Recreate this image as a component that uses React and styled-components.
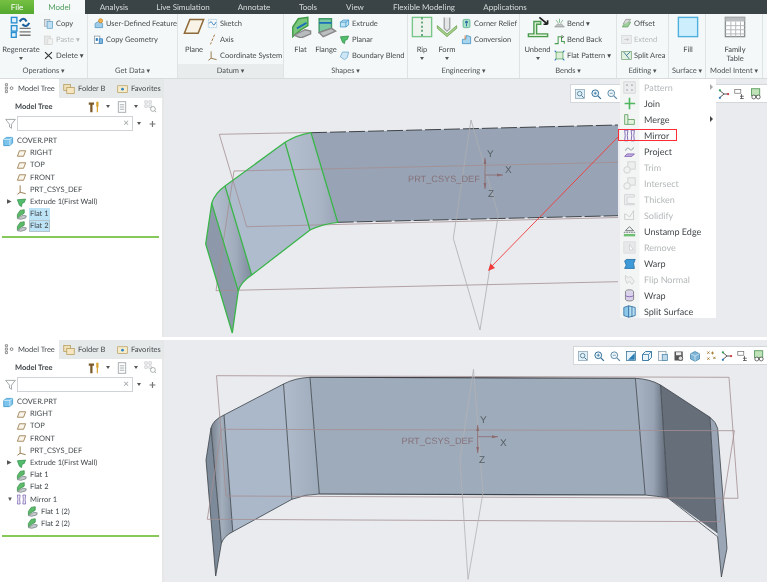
import React from 'react';
import styled, { createGlobalStyle } from 'styled-components';

const FONT = `Lato, "Open Sans", sans-serif`;

const GlobalStyle = createGlobalStyle`
  html, body { margin: 0; padding: 0; background: #fff; }
  body { font-family: ${FONT}; color: #43494c; }
`;

// Icons, all drawn in a 16x16 box
const ICONS = {
  regen: <><rect x="1" y="1" width="4" height="4" fill="#dff1fb" stroke="#2a8fd0"/><rect x="1" y="7" width="4" height="4" fill="#dff1fb" stroke="#2a8fd0"/><rect x="1" y="12" width="3.5" height="3.5" fill="#dff1fb" stroke="#2a8fd0"/><path d="M7 4q3-4 5 0M14 5q-2 4-5 1" fill="none" stroke="#1c5f9c" strokeWidth="1.6"/><path d="M7 9h8M7 11.5h8M7 14h8" stroke="#777" strokeWidth="1"/></>,
  copy: <><rect x="2" y="2" width="8" height="10" fill="#d8dfe4" stroke="#9aa4aa"/><rect x="6" y="5" width="8" height="10" fill="#bfe0f3" stroke="#5b9cc4"/></>,
  paste: <><rect x="2" y="3" width="9" height="12" fill="#e2e2e2" stroke="#c4c4c4"/><rect x="7" y="7" width="7" height="8" fill="#f0f0f0" stroke="#c8c8c8"/></>,
  del: <path d="M3 3l10 10M13 3L3 13" stroke="#333" strokeWidth="1.6"/>,
  udf: <><path d="M3 14V8l5-3 6 3v6z" fill="#9ccce8" stroke="#4a90bd"/><circle cx="11" cy="4" r="3" fill="#f0b34c" stroke="#c07f20"/></>,
  cgeom: <><rect x="2" y="3" width="8" height="11" fill="#fff" stroke="#7b8a94"/><rect x="4" y="6" width="3" height="4" fill="#2a78b8"/><rect x="9" y="7" width="5" height="7" fill="#7fb8dc" stroke="#2a78b8"/></>,
  plane: <path d="M5 2.5h10l-4 10H1z" fill="#f8f3e6" stroke="#8d6a38" strokeWidth="1.1"/>,
  sketch: <><path d="M2 2h12v12H2z" fill="none" stroke="#8fb9d6" strokeDasharray="2 1"/><path d="M3 8q3-5 5 0t5-2" fill="none" stroke="#2a78b8" strokeWidth="1.3"/></>,
  axis: <path d="M11 1L5 15" stroke="#9a6a30" strokeWidth="1.3" strokeDasharray="4 2"/>,
  csys: <path d="M6 2v10M6 12l8 2M6 12l-4 3" fill="none" stroke="#86642f" strokeWidth="1.2"/>,
  flat: <><path d="M2 15V8l4-6 7-1v6l-5 3z" fill="#79c77a" stroke="#3f9a47"/><path d="M3 14l8-4 4 1 0 2-7 3z" fill="#b9bcbe" stroke="#888"/><path d="M5 9l7-4" stroke="#1b6fb8" strokeWidth="1.3"/></>,
  flange: <><path d="M3 12V2h9v7z" fill="#7ac7a0" stroke="#3f9a67"/><path d="M3 5h9" stroke="#1b6fb8" strokeWidth="1.3"/><path d="M3 12l9-3 3 2-9 4z" fill="#bcbfc0" stroke="#888"/></>,
  extrude: <><path d="M2 6l4-3h8v7l-4 3H2z" fill="#bfe3f5" stroke="#2d8bc2"/><path d="M2 6h8v7M10 6l4-3" fill="none" stroke="#2d8bc2"/></>,
  planar: <path d="M2 4l12-1-2 5-3 1-1 5-3-2z" fill="#53bd6e" stroke="#2d8a46"/>,
  boundary: <path d="M2 10l3-7h9l-2 8-4 3z" fill="#cfe7f5" stroke="#5c9fcb"/>,
  rip: <><rect x="1" y="1" width="14" height="14" fill="#eef3ee" stroke="#79c68b"/><path d="M8 1v14" stroke="#2a8a4e" strokeDasharray="1.5 1.5"/></>,
  form: <><path d="M1 7l7 6 7-6v2l-7 6-7-6z" fill="#a8d08d" stroke="#6fa356" strokeWidth=".6"/><path d="M6 1v8l2 2 2-2V1" fill="#e4e6e8" stroke="#a2a6a8"/></>,
  corner: <><rect x="3" y="2" width="10" height="12" rx="2" fill="#a8e2c8" stroke="#43a47a"/><circle cx="8" cy="6" r="2" fill="#2e6ea6"/><path d="M8 8v4" stroke="#2e6ea6" strokeWidth="1.5"/></>,
  conversion: <><path d="M2 14V8l5-1 1-5 6 2v10z" fill="#a8d5ee" stroke="#2f86bc"/><path d="M6 2v6" stroke="#d67d3e" strokeWidth="1.4"/></>,
  unbend: <><path d="M1 13h4V4h5v2h-3v7h8v2H1z" fill="#dff0d8" stroke="#4a9a4e"/><path d="M9 1l6 5M15 6V3M15 6h-3" fill="none" stroke="#222" strokeWidth="1.2"/></>,
  bend: <><path d="M1 13l5-5 2 2 2-2 5 5z" fill="#bcc3c0" stroke="#8b938f"/><path d="M8 1v6M3 3l3 4M13 3l-3 4" stroke="#7fb98a" strokeWidth="1.4"/></>,
  bendback: <><path d="M1 14h5V4h5v7h4v3" fill="none" stroke="#4a9a4e" strokeWidth="1.5"/><path d="M11 2l3 2-3 2" fill="none" stroke="#333"/></>,
  flatp: <><rect x="3" y="3" width="10" height="10" fill="#dcefd9" stroke="#4a9a4e"/><path d="M3 3L1 1M13 3l2-2M3 13l-2 2M13 13l2 2" stroke="#2a78b8" strokeWidth="1.5"/></>,
  offset: <><path d="M2 13l4-7h8l-4 7z" fill="#9fcf9d" stroke="#5c9a5a"/><path d="M3 9l4-7h7l-3 4" fill="#d8d8d8" stroke="#8c8c8c"/></>,
  extend: <><rect x="1" y="2" width="14" height="12" fill="#e8e9ea" stroke="#c6c9cb"/><path d="M5 8h6M9 6l2 2-2 2" fill="none" stroke="#aaa"/></>,
  split: <><rect x="1" y="2" width="14" height="12" fill="#e2f1df" stroke="#6d9a72"/><path d="M4 3l8 10M8 8l5-5" stroke="#276b8f" strokeWidth="1.2"/></>,
  fill: <><rect x="1" y="1" width="14" height="14" fill="#cdeefc" stroke="#4fb0e0"/></>,
  table: <><rect x="1" y="1" width="14" height="14" fill="#fff" stroke="#8a8f92"/><rect x="1" y="1" width="14" height="3" fill="#b9bdc0"/><path d="M1 7h14M1 10h14M1 13h14M5 4v11M8.5 4v11M12 4v11" stroke="#b3b7ba" strokeWidth=".7"/></>,
  cube: <><path d="M1 5l4-3h9v8l-4 4H1z" fill="#7cc4ec" stroke="#2a8cc8"/><path d="M1 5h9v9M10 5l4-3" fill="none" stroke="#e8f6fd"/></>,
  planeSm: <path d="M5 4h9l-3 8H2z" fill="#faf5ea" stroke="#8d6a38" strokeWidth="1.1"/>,
  flatTree: <><path d="M2 13V8l4-6 6-1v5L7 9z" fill="#5dba6a" stroke="#2e8a42"/><path d="M2 14l8-5 5 1-1 3-7 2z" fill="#c5c9cb" stroke="#6f7a7c"/></>,
  mirror: <path d="M2 1.5h4q-1.5 6.5 0 13H2q1.5-6.5 0-13zM14 1.5h-4q1.5 6.5 0 13h4q-1.5-6.5 0-13z" fill="#f5f2fb" stroke="#6b54a8" strokeWidth="1"/>,
  hammer: <><path d="M1 2h7v3H6v10H3V5H1z" fill="#7a5a2a"/><path d="M11 1h3v6l-.7 1v7h-1.6V8L11 7z" fill="#d8a32f"/></>,
  doc: <><rect x="3" y="1" width="10" height="14" fill="#fff" stroke="#8f9699"/><path d="M5 5h6M5 8h6M5 11h6" stroke="#8f9699"/></>,
  settings: <><path d="M1 1h3v3H1zM6 1h3v3H6zM1 6h3v3H1zM6 6h3v3H6z" fill="none" stroke="#c5c8ca"/><circle cx="11" cy="11" r="3" fill="none" stroke="#9da1a3"/><path d="M13 13l2 2" stroke="#9da1a3"/></>,
  filter: <path d="M1 2h14L9.5 9v6l-3-2V9z" fill="#fff" stroke="#7c8386"/>,
  tabTree: <><path d="M2 1h3v3H2zM2 6h3v3H2zM2 11h3v3H2z" fill="none" stroke="#666"/><circle cx="11" cy="7.5" r="2" fill="none" stroke="#555"/></>,
  tabFolder: <><rect x="1" y="2" width="9" height="8" fill="#efe1b9" stroke="#b49a5a"/><rect x="5" y="6" width="10" height="8" fill="#f5e6c0" stroke="#b49a5a"/></>,
  tabFav: <><rect x="1" y="4" width="14" height="10" fill="#f7ecc9" stroke="#b49a5a"/><circle cx="8" cy="9" r="2" fill="#2d84c8"/></>,
  pattern: <><rect x="1" y="1" width="14" height="14" fill="#e9eaeb" stroke="#c8cacc"/><path d="M4 4h2v2H4zM10 4h2v2h-2zM4 10h2v2H4zM10 10h2v2h-2z" fill="#9aa0a4"/></>,
  join: <path d="M7 1h2v6h6v2H9v6H7V9H2V7h5z" fill="#4fb85f"/>,
  merge: <><path d="M2 2h4v6h8v6H2z" fill="#e3f1de" stroke="#5e9c5e"/><path d="M6 8v6" stroke="#5e9c5e"/></>,
  project: <><path d="M2 14l3-3h9l-3 3z" fill="#c8b4e4" stroke="#7a5ab0"/><path d="M3 7q2-5 5-2t5-2" fill="none" stroke="#7a8a90"/></>,
  trim: <><rect x="6" y="1" width="9" height="9" fill="#ececec" stroke="#c0c2c4"/><circle cx="5" cy="11" r="4" fill="#f0f0f0" stroke="#bcbec0"/></>,
  thicken: <path d="M2 2h12v3H5v8h9v1.5H2z" fill="#eceded" stroke="#c2c4c6"/>,
  solidify: <path d="M2 6l3 1 3 3 5-8v11H2z" fill="#f4f4f4" stroke="#b8babc"/>,
  unstamp: <><path d="M1 11h14v3H1z" fill="#6fbf73"/><path d="M8 2l5 5H3z" fill="#f2f2f2" stroke="#5b6468"/><path d="M1 9h14" stroke="#5b6468" strokeDasharray="2 1"/></>,
  remove: <><rect x="1" y="1" width="14" height="14" fill="#e4e5e6" stroke="#d0d2d4"/><path d="M8 4l5 7H8z" fill="#fff" stroke="#bfc1c3"/></>,
  warp: <path d="M4 3h11l-2 5 1 6H2l2-4-2-5z" fill="#3f9bd8" stroke="#1f6ca5"/>,
  flip: <path d="M3 3l4 3 2-2 5 6-3 4-3-4-3 3-2-5z" fill="#eee" stroke="#bcbec0"/>,
  wrap: <><ellipse cx="8" cy="3.5" rx="5" ry="2.5" fill="#dcdcea" stroke="#777"/><path d="M3 3.5v9c0 3 10 3 10 0v-9" fill="#d9d2ea" stroke="#777"/><path d="M3 8c1 2 9 2 10 0" fill="none" stroke="#7a5ab0"/></>,
  splitS: <><path d="M1 3l6-2v14l-6-2z" fill="#8cc8ea" stroke="#2d6d9e"/><path d="M7 1l8 2v10l-8 2z" fill="#b6def3" stroke="#2d6d9e"/><path d="M11 2v13" stroke="#2d6d9e"/></>,
  vFit: <><rect x="2" y="2" width="12" height="12" fill="#dff0f8" stroke="#8aa4b3"/><circle cx="7.5" cy="7.5" r="3" fill="none" stroke="#46708a"/><path d="M10 10l3 3" stroke="#46708a" strokeWidth="1.3"/></>,
  vIn: <><circle cx="7" cy="7" r="4.5" fill="#e8f4fb" stroke="#336f98" strokeWidth="1.3"/><path d="M5 7h4M7 5v4" stroke="#336f98"/><path d="M10.5 10.5l4 4" stroke="#336f98" strokeWidth="1.6"/></>,
  vOut: <><circle cx="7" cy="7" r="4.5" fill="#eef6fb" stroke="#5a8aa8" strokeWidth="1.3"/><path d="M5 7h4" stroke="#5a8aa8"/><path d="M10.5 10.5l4 4" stroke="#5a8aa8" strokeWidth="1.6"/></>,
  vRepaint: <><rect x="2" y="2" width="12" height="12" fill="#e7f3fa" stroke="#356f97"/><path d="M4 13L13 4v9z" fill="#2a7fb7"/></>,
  vCube: <><path d="M2 6l4-4h8v8l-4 4H2z" fill="#eaf5fb" stroke="#2d719f" strokeWidth="1.2"/><path d="M2 6h8v8M10 6l4-4" fill="none" stroke="#2d719f"/></>,
  vViews: <><rect x="2" y="2" width="10" height="12" fill="#f4f6f7" stroke="#7f98a8"/><rect x="7" y="6" width="7" height="8" fill="#bcd9ea" stroke="#4c86ab"/></>,
  vSaved: <><rect x="2" y="2" width="11" height="12" fill="#555"/><rect x="4" y="3" width="7" height="4" fill="#eee"/><circle cx="10" cy="11" r="3" fill="#ddd" stroke="#444"/></>,
  vDisp: <><path d="M2 5l6-3 6 3v7l-6 3-6-3z" fill="#7fb6d8" stroke="#4783a8"/><path d="M2 5l6 3 6-3M8 8v7" fill="none" stroke="#d4e7f2"/></>,
  vDatum: <><path d="M3 2l3 3M3 5l3-3M10 2v4M8 4h4M3 10l3 3M3 13l3-3M11 9l3 3M11 12l3-3" stroke="#a57a30" strokeWidth="1.2"/></>,
  vBranch: <><path d="M2 3l6 5-6 5M8 8h6" fill="none" stroke="#444" strokeWidth="1.2"/><circle cx="2.5" cy="3" r="1.5" fill="#2aa050"/><circle cx="2.5" cy="13" r="1.5" fill="#2d7cc0"/><circle cx="13.5" cy="8" r="1.5" fill="#d23a3a"/></>,
  vTree: <><rect x="1" y="2" width="8" height="5" fill="#fff" stroke="#777"/><path d="M10 8v6M8 11h5M8 14h5" stroke="#444"/></>,
  vPerf: <><rect x="2" y="1" width="11" height="9" fill="#bfe2b9" stroke="#3f8c45"/><circle cx="5" cy="12" r="2.6" fill="#fff" stroke="#444"/><circle cx="11" cy="12" r="2.6" fill="#fff" stroke="#444"/></>,
};

const IconBox = styled.svg`
  display: block;
  flex: none;
  width: ${(p) => p.$size}px;
  height: ${(p) => p.$size}px;
  opacity: ${(p) => (p.$faded ? 0.75 : 1)};
`;

const Icon = ({ name, size = 12, faded }) => (
  <IconBox viewBox="0 0 16 16" $size={size} $faded={faded}>{ICONS[name]}</IconBox>
);

const Page = styled.div`
  position: relative;
  width: 767px;
  height: 582px;
  overflow: hidden;
  background: #fff;
  font-size: 7.5px;
  text-rendering: geometricPrecision;
  filter: blur(0.3px);
`;

// Top tabs
const TabBar = styled.div`
  display: flex;
  height: 14px;
  background: #3a4345;
`;

const Tab = styled.div`
  width: ${(p) => p.$w}px;
  line-height: 14px;
  text-align: center;
  font-size: 8px;
  color: ${(p) => (p.$active ? '#4f9d5e' : '#d7dcdc')};
  background: ${(p) => (p.$active ? '#f6f9f9' : p.$file ? 'linear-gradient(#76c043, #54a92f)' : 'none')};
  ${(p) => p.$file && 'color: #fff;'}
`;

// Ribbon
const Ribbon = styled.div`
  display: flex;
  height: 65px;
  background: #f5f8f8;
  border-bottom: 1px solid #d9dcdc;
  box-sizing: border-box;
`;

const Group = styled.div`
  display: flex;
  flex-direction: column;
  flex: none;
  width: ${(p) => p.$w}px;
  box-sizing: border-box;
  border-right: 1px solid #dfe3e3;
`;

const GroupBody = styled.div`
  flex: 1;
  display: flex;
  gap: ${(p) => p.$gap || 3}px;
  padding: 1px 0 0 ${(p) => p.$pad || 3}px;
  min-height: 0;
`;

const GroupFooter = styled.div`
  height: 14px;
  line-height: 14px;
  text-align: center;
  white-space: nowrap;
  color: #4c5255;
  background: ${(p) => (p.$shade ? '#e9ecec' : 'none')};
  &::after {
    content: ' ▾';
    font-size: 7px;
  }
`;

const BigButton = styled.div`
  display: flex;
  flex-direction: column;
  align-items: center;
  flex: none;
  width: ${(p) => p.$w}px;
  padding-top: 1px;
`;

const BigLabel = styled.div`
  margin-top: 7px;
  line-height: 9px;
  text-align: center;
  white-space: pre;
`;

const Caret = styled.div`
  flex: none;
  width: 0;
  height: 0;
  margin-top: ${(p) => p.$top ?? 3}px;
  border: 2px solid transparent;
  border-top: 3px solid #555;
  border-bottom: 0;
`;

const SmallStack = styled.div`
  display: flex;
  flex-direction: column;
`;

const SmallRow = styled.div`
  display: flex;
  align-items: center;
  gap: 2px;
  height: 16px;
  white-space: nowrap;
  color: ${(p) => (p.$off ? '#b4b8ba' : 'inherit')};
`;

const Work = styled.div`
  display: flex;
  flex-direction: column;
  gap: 3px;
`;

const Pane = styled.div`
  display: flex;
  height: ${(p) => p.$h}px;
`;

// Model tree side panel
const Side = styled.div`
  flex: none;
  width: 164px;
  box-sizing: border-box;
  border-right: 2px solid #e6e8e8;
  background: #fff;
`;

const SideTabs = styled.div`
  display: flex;
  height: 19px;
  background: #e6e9e9;
`;

const SideTab = styled.div`
  display: flex;
  align-items: center;
  gap: 3px;
  flex: none;
  width: ${(p) => p.$w}px;
  padding-left: 4px;
  box-sizing: border-box;
  white-space: nowrap;
  background: ${(p) => (p.$active ? '#fff' : 'none')};
`;

const TreeHead = styled.div`
  display: flex;
  align-items: center;
  height: 17px;
  padding-left: 15px;
  font-weight: 700;
`;

const HeadTools = styled.div`
  display: flex;
  align-items: center;
  gap: 6px;
  margin-left: auto;
  padding-right: 5px;
`;

const FilterRow = styled.div`
  display: flex;
  align-items: center;
  height: 16px;
  padding-left: 5px;
`;

const FilterInput = styled.div`
  display: flex;
  align-items: center;
  justify-content: flex-end;
  width: 116px;
  height: 15px;
  margin-left: 1px;
  padding-right: 3px;
  box-sizing: border-box;
  border: 1px solid #cfd3d5;
  color: #9a9ea0;
  font-size: 10px;
`;

const PlusMark = styled.span`
  margin-left: 8px;
  font-size: 12px;
  font-weight: 700;
  color: #777;
`;

const TreeList = styled.div`
  display: flex;
  flex-direction: column;
  padding-top: 4px;
`;

const TreeRow = styled.div`
  display: flex;
  align-items: center;
  gap: 2px;
  height: 12.2px;
  padding-left: ${(p) => p.$indent}px;
  white-space: nowrap;
`;

const Twist = styled.span`
  flex: none;
  width: 8px;
  margin-left: -9px;
  margin-right: -1px;
  font-size: 6px;
  line-height: 12px;
  color: #555;
`;

const TreeLabel = styled.span`
  padding: 0 1px;
  line-height: 12px;
  background: ${(p) => (p.$sel ? '#bde3f7' : 'none')};
  outline: ${(p) => (p.$outline ? '1px solid #b3c4cc' : 'none')};
  outline-offset: -1px;
`;

const TreeEnd = styled.div`
  height: 2px;
  margin: ${(p) => p.$top}px 3px 0 2px;
  background: #86c85a;
`;

// Graphics window
const Canvas = styled.div`
  position: relative;
  flex: 1;
  background: #e9ebef;
`;

const Drawing = styled.svg`
  display: block;
  width: 100%;
  height: 100%;
`;

const ViewBar = styled.div`
  position: absolute;
  top: ${(p) => p.$top}px;
  left: ${(p) => p.$left}px;
  right: 0;
  display: flex;
  align-items: center;
  height: 17px;
  padding-left: 3px;
  gap: 4px;
  background: #fff;
  border: 1px solid #d4d7da;
  border-right: 0;
`;

// Editing flyout over the graphics window
const Menu = styled.div`
  position: absolute;
  top: 79px;
  left: 620px;
  width: 96px;
  height: 239px;
  box-sizing: border-box;
  background: linear-gradient(90deg, #f3f4f4 19px, #fff 20px);
  font-size: 9px;
`;

const MenuRow = styled.div`
  position: relative;
  display: flex;
  align-items: center;
  gap: 8px;
  height: 16px;
  padding-left: 3px;
  color: ${(p) => (p.$off ? '#b4b8ba' : '#43494c')};
`;

const MoreArrow = styled.span`
  position: absolute;
  right: 3px;
  top: 5px;
  border-left: 3px solid ${(p) => (p.$off ? '#aaa' : '#444')};
  border-top: 3px solid transparent;
  border-bottom: 3px solid transparent;
`;

const RedMark = styled.span`
  position: absolute;
  left: -2px;
  top: 2px;
  width: 59px;
  height: 12px;
  box-sizing: border-box;
  border: 1.5px solid #ff2b35;
`;

const ViewText = styled.text`
  font-family: "Liberation Sans", sans-serif;
  font-size: ${(p) => p.$size}px;
  fill: ${(p) => p.$fill};
`;

const Shade = ({ id, stops }) => (
  <linearGradient id={id} x1="0" y1="0" x2="1" y2="0">
    {stops.map(([o, c]) => <stop key={o} offset={o} stopColor={c} />)}
  </linearGradient>
);

const CsysMark = ({ x, y, label, yTip, xTip, zTip, labels }) => (
  <>
    <ViewText x={label} y={y + 7} $size={9.2} $fill="#86727a">PRT_CSYS_DEF</ViewText>
    <path d={`M${x} ${y}V${yTip}M${x} ${y}H${xTip}M${x} ${y}V${zTip}`} stroke="#8c6a6e" strokeWidth="0.8" fill="none" />
    <path d={`M${xTip} ${y}l-6 -1.5v3zM${x} ${yTip}l-1.4 6h2.8zM${x} ${zTip}l-1.4 -6h2.8z`} fill="#8c6a6e" />
    <ViewText x={labels.y[0]} y={labels.y[1]} $size={10} $fill="#555d62">Y</ViewText>
    <ViewText x={labels.x[0]} y={labels.x[1]} $size={10} $fill="#555d62">X</ViewText>
    <ViewText x={labels.z[0]} y={labels.z[1]} $size={10} $fill="#555d62">Z</ViewText>
  </>
);

// First view: the green selected walls on the left
const UpperModel = () => (
  <Drawing viewBox="164 79 603 258" preserveAspectRatio="none">
    <defs>
      <Shade id="ub1" stops={[[0, '#b4c0cf'], [0.7, '#a8b4c4'], [1, '#98a4b5']]} />
      <Shade id="ub2" stops={[[0, '#b4c0cf'], [0.6, '#a0acbc'], [1, '#7f8c9e']]} />
    </defs>
    <path d="M311 132.7L618 125V215.7L337.7 222.3z" fill="#98a4b5" />
    <path d="M285 142.3Q297 135 311 132.7L337.7 222.3Q322 224 310 230z" fill="url(#ub1)" />
    <path d="M285 142.3L225 186L251.7 275L310 230z" fill="#afbccd" />
    <path d="M225 186Q215 193 211.7 203.3L238.3 290.7Q241 282 251.7 275z" fill="url(#ub2)" />
    <path d="M211.7 203.3L205.7 244L232.3 333L238.3 290.7z" fill="#8d99aa" />
    <path d="M311 132.7L618 125M337.7 222.3L618 215.7" stroke="#3f4347" strokeWidth="1" strokeDasharray="16 3" fill="none" />
    <g fill="none" stroke="#a58e90" strokeWidth="0.8">
      <path d="M311 132.5L219.3 134.3L246.7 226.7L618 217.5" />
      <path d="M234 171L618 162.3M234 171L216 290.7L618 281.7" />
    </g>
    <path d="M471 120L498.3 215L480 330L453.3 238.3z" fill="none" stroke="#adadb0" strokeWidth="0.8" />
    <g fill="none" stroke="#3ab54a" strokeWidth="1.3">
      <path d="M311 132.7Q297 135 285 142.3L225 186Q215 193 211.7 203.3L205.7 244L232.3 333L238.3 290.7Q241 282 251.7 275L310 230Q322 224 337.7 222.3z" />
      <path d="M285 142.3L310 230M225 186L251.7 275M211.7 203.3L238.3 290.7" />
    </g>
    <CsysMark x={485} y={175} label={408} yTip={158} xTip={503} zTip={189} labels={{ y: [487, 157], x: [505, 173], z: [488, 197] }} />
    <path d="M618 137L490 268" stroke="#f03a3a" strokeWidth="0.9" />
    <path d="M488 271L490.5 263.5L495 268z" fill="#f03a3a" />
  </Drawing>
);

// Second view: the mirrored part
const LowerModel = () => (
  <Drawing viewBox="164 340 603 242" preserveAspectRatio="none">
    <defs>
      <Shade id="lb1" stops={[[0, '#b0bccb'], [1, '#9eabbb']]} />
      <Shade id="lb2" stops={[[0, '#a8b4c4'], [0.55, '#97a3b3'], [1, '#596270']]} />
      <Shade id="lb3" stops={[[0, '#78818e'], [0.5, '#a4afbd'], [1, '#8693a3']]} />
    </defs>
    <path d="M310 377.3L635.4 378.3L645.2 495L319.3 494z" fill="#9eabbb" />
    <path d="M310 377.3Q295 378 283.5 384L291.9 499.3Q306 494 319.3 494z" fill="url(#lb1)" />
    <path d="M283.5 384L224 415L232.8 531.7L291.9 499.3z" fill="#abb8c9" />
    <path d="M224 415Q213 420 211 428L221.4 543.3Q224 536 232.8 531.7z" fill="url(#lb3)" />
    <path d="M211 428L206 460L215.7 576L221.4 543.3z" fill="#7d8a9a" />
    <path d="M635.4 378.3Q650 379 660.5 385L668 498Q656 496 645.2 495z" fill="url(#lb2)" />
    <path d="M660.5 385L710 417.3L717 533L668 498z" fill="#666e7a" />
    <path d="M710 417.3Q716 422 717.6 428.3L727 548.3L721.4 577L717.6 536.7L717 533z" fill="#9aa6b6" />
    <g fill="none" stroke="#3c4248" strokeWidth="0.8">
      <path d="M310 377.3L635.4 378.3M319.3 494L645.2 495" strokeWidth="1.1" />
      <path d="M310 377.3L319.3 494M635.4 378.3L645.2 495M283.5 384L291.9 499.3M660.5 385L668 498M224 415L232.8 531.7M710 417.3L717 533" />
      <path d="M310 377.3Q295 378 283.5 384L224 415Q213 420 211 428L206 460L215.7 576L221.4 543.3Q224 536 232.8 531.7L291.9 499.3Q306 494 319.3 494" />
      <path d="M635.4 378.3Q650 379 660.5 385L710 417.3Q716 422 717.6 428.3L727 548.3L721.4 577L717.6 536.7L668 498Q656 496 645.2 495" />
      <path d="M211 428L221.4 543.3" />
    </g>
    <g fill="none" stroke="#a58e90" strokeWidth="0.8">
      <path d="M216.5 375.7L729 377.3L738 498.3L226 496z" />
      <path d="M221.4 429.3L734.4 430.7L720 521.7L207.3 519.3z" />
    </g>
    <path d="M473.5 369.3L483 493L468 579.3L460 460z" fill="none" stroke="#b2b2b6" strokeWidth="0.8" />
    <CsysMark x={477.7} y={436.7} label={401.5} yTip={425} xTip={498} zTip={453} labels={{ y: [480, 423], x: [500, 446], z: [479, 463] }} />
  </Drawing>
);

const GROUPS = [
  { name: 'Operations', w: 88, pad: 2, items: [
    { big: 'regen', label: 'Regenerate', w: 38, caret: true },
    { stack: [['copy', 'Copy'], ['paste', 'Paste  ▾', true], ['del', 'Delete  ▾']] },
  ] },
  { name: 'Get Data', w: 90, pad: 5, items: [
    { stack: [['udf', 'User-Defined Feature'], ['cgeom', 'Copy Geometry']] },
  ] },
  { name: 'Datum', w: 106, pad: 4, gap: 1, shade: true, items: [
    { big: 'plane', label: 'Plane', w: 24 },
    { stack: [['sketch', 'Sketch'], ['axis', 'Axis'], ['csys', 'Coordinate System']] },
  ] },
  { name: 'Shapes', w: 124, pad: 4, gap: 1, items: [
    { big: 'flat', label: 'Flat', w: 25 },
    { big: 'flange', label: 'Flange', w: 24 },
    { stack: [['extrude', 'Extrude'], ['planar', 'Planar'], ['boundary', 'Boundary Blend']] },
  ] },
  { name: 'Engineering', w: 112, pad: 3, gap: 3, items: [
    { big: 'rip', label: 'Rip', w: 22, caret: true },
    { big: 'form', label: 'Form', w: 22, caret: true },
    { stack: [['corner', 'Corner Relief'], ['conversion', 'Conversion']] },
  ] },
  { name: 'Bends', w: 97, pad: 4, gap: 3, items: [
    { big: 'unbend', label: 'Unbend', w: 27, caret: true },
    { stack: [['bend', 'Bend  ▾'], ['bendback', 'Bend Back'], ['flatp', 'Flat Pattern  ▾']] },
  ] },
  { name: 'Editing', w: 52, pad: 4, items: [
    { stack: [['offset', 'Offset'], ['extend', 'Extend', true], ['split', 'Split Area']] },
  ] },
  { name: 'Surface', w: 37, pad: 4, items: [{ big: 'fill', label: 'Fill', w: 30 }] },
  { name: 'Model Intent', w: 57, pad: 11, items: [{ big: 'table', label: 'Family\nTable', w: 36 }] },
];

const BaseRows = [
  { icon: 'planeSm', label: 'RIGHT', indent: 16 },
  { icon: 'planeSm', label: 'TOP', indent: 16 },
  { icon: 'planeSm', label: 'FRONT', indent: 16 },
  { icon: 'csys', label: 'PRT_CSYS_DEF', indent: 16 },
  { icon: 'planar', label: 'Extrude 1(First Wall)', indent: 16, twist: '▶' },
];

const UPPER_TREE = [
  { icon: 'cube', label: 'COVER.PRT', indent: 3 },
  ...BaseRows,
  { icon: 'flatTree', label: 'Flat 1', indent: 16, sel: true },
  { icon: 'flatTree', label: 'Flat 2', indent: 16, sel: true, outline: true },
];

const LOWER_TREE = [
  { icon: 'cube', label: 'COVER.PRT', indent: 3 },
  ...BaseRows,
  { icon: 'flatTree', label: 'Flat 1', indent: 16 },
  { icon: 'flatTree', label: 'Flat 2', indent: 16 },
  { icon: 'mirror', label: 'Mirror 1', indent: 16, twist: '▼' },
  { icon: 'flatTree', label: 'Flat 1 (2)', indent: 27 },
  { icon: 'flatTree', label: 'Flat 2 (2)', indent: 27 },
];

const MENU = [
  { icon: 'pattern', label: 'Pattern', off: true, more: true },
  { icon: 'join', label: 'Join' },
  { icon: 'merge', label: 'Merge', more: true },
  { icon: 'mirror', label: 'Mirror', marked: true },
  { icon: 'project', label: 'Project' },
  { icon: 'trim', label: 'Trim', off: true },
  { icon: 'trim', label: 'Intersect', off: true },
  { icon: 'thicken', label: 'Thicken', off: true },
  { icon: 'solidify', label: 'Solidify', off: true },
  { icon: 'unstamp', label: 'Unstamp Edge' },
  { icon: 'remove', label: 'Remove', off: true },
  { icon: 'warp', label: 'Warp' },
  { icon: 'flip', label: 'Flip Normal', off: true },
  { icon: 'wrap', label: 'Wrap' },
  { icon: 'splitS', label: 'Split Surface' },
];

const VIEW_ICONS = ['vFit', 'vIn', 'vOut', 'vRepaint', 'vCube', 'vViews', 'vSaved', 'vDisp', 'vDatum', 'vBranch', 'vTree', 'vPerf'];

const TABS = [
  ['File', 34, { $file: true }],
  ['Model', 51, { $active: true }],
  ['Analysis', 58],
  ['Live Simulation', 80],
  ['Annotate', 62],
  ['Tools', 46],
  ['View', 48],
  ['Flexible Modeling', 90],
  ['Applications', 72],
];

const ModelTreePanel = ({ rows, endTop }) => (
  <Side>
    <SideTabs>
      <SideTab $active $w={59}><Icon name="tabTree" size={11} />Model Tree</SideTab>
      <SideTab $w={54}><Icon name="tabFolder" size={12} />Folder B</SideTab>
      <SideTab $w={48}><Icon name="tabFav" size={11} />Favorites</SideTab>
    </SideTabs>
    <TreeHead>
      Model Tree
      <HeadTools>
        <Icon name="hammer" size={12} />
        <Caret $top={0} />
        <Icon name="doc" size={12} />
        <Caret $top={0} />
        <Icon name="settings" size={13} />
      </HeadTools>
    </TreeHead>
    <FilterRow>
      <Icon name="filter" size={11} />
      <FilterInput>×</FilterInput>
      <Caret $top={0} style={{ marginLeft: 4 }} />
      <PlusMark>+</PlusMark>
    </FilterRow>
    <TreeList>
      {rows.map((r, i) => (
        <TreeRow key={i} $indent={r.indent}>
          {r.twist && <Twist>{r.twist}</Twist>}
          <Icon name={r.icon} size={11} />
          <TreeLabel $sel={r.sel} $outline={r.outline}>{r.label}</TreeLabel>
        </TreeRow>
      ))}
    </TreeList>
    <TreeEnd $top={endTop} />
  </Side>
);

const App = () => (
  <Page>
    <GlobalStyle />
    <TabBar>
      {TABS.map(([label, w, flags]) => (
        <Tab key={label} $w={w} {...flags}>{label}</Tab>
      ))}
    </TabBar>
    <Ribbon>
      {GROUPS.map((g) => (
        <Group key={g.name} $w={g.w}>
          <GroupBody $gap={g.gap} $pad={g.pad}>
            {g.items.map((it, i) => it.big ? (
              <BigButton key={i} $w={it.w}>
                <Icon name={it.big} size={22} />
                <BigLabel>{it.label}</BigLabel>
                {it.caret && <Caret />}
              </BigButton>
            ) : (
              <SmallStack key={i}>
                {it.stack.map(([icon, label, off]) => (
                  <SmallRow key={label} $off={off}>
                    <Icon name={icon} size={11} faded={off} />
                    {label}
                  </SmallRow>
                ))}
              </SmallStack>
            ))}
          </GroupBody>
          <GroupFooter $shade={g.shade}>{g.name}</GroupFooter>
        </Group>
      ))}
    </Ribbon>
    <Work>
      <Pane $h={258}>
        <ModelTreePanel rows={UPPER_TREE} endTop={3} />
        <Canvas>
          <UpperModel />
          <ViewBar $top={5} $left={406}>
            {VIEW_ICONS.map((n) => <Icon key={n} name={n} size={12} />)}
          </ViewBar>
        </Canvas>
      </Pane>
      <Pane $h={242}>
        <ModelTreePanel rows={LOWER_TREE} endTop={5} />
        <Canvas>
          <LowerModel />
          <ViewBar $top={6} $left={409}>
            {VIEW_ICONS.map((n) => <Icon key={n} name={n} size={12} />)}
          </ViewBar>
        </Canvas>
      </Pane>
    </Work>
    <Menu>
      {MENU.map((m) => (
        <MenuRow key={m.label} $off={m.off}>
          <Icon name={m.icon} size={13} faded={m.off} />
          {m.label}
          {m.more && <MoreArrow $off={m.off} />}
          {m.marked && <RedMark />}
        </MenuRow>
      ))}
    </Menu>
  </Page>
);

export default App;
